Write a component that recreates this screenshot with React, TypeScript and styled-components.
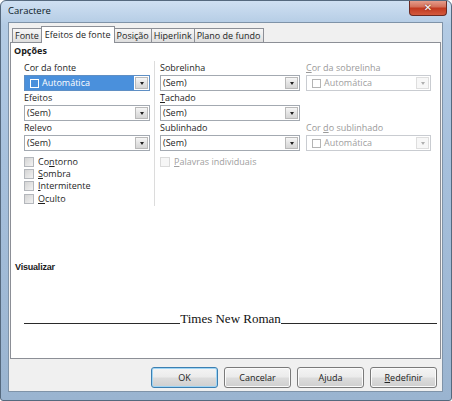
import styled, { createGlobalStyle, css } from 'styled-components';

const ui = '"Open Sans", "Noto Sans", sans-serif';

const GlobalStyle = createGlobalStyle`
  html, body { margin: 0; padding: 0; background: #ffffff; }
  body { font-family: ${ui}; font-size: 9px; color: #1e1e1e; }
  * { box-sizing: border-box; }
`;

const Window = styled.div`
  width: 452px;
  height: 401px;
  padding: 0 8px 8px 7px;
  display: flex;
  flex-direction: column;
  border: 1px solid #55697e;
  border-radius: 6px 6px 3px 3px;
  background: linear-gradient(180deg, #cfe0f2 0%, #b3cbe4 6%, #a6c0dc 40%, #9ab4d0 100%);
  overflow: hidden;
`;

const TitleBar = styled.div`
  height: 21px;
  display: flex;
  justify-content: space-between;
  align-items: flex-start;
`;

const Title = styled.div`
  padding: 3px 0 0 0;
  font-size: 9.5px;
  line-height: 14px;
  color: #0b1826;
`;

const CloseButton = styled.div`
  width: 38px;
  height: 16px;
  margin: -1px -4px 0 0;
  border: 1px solid #6c2a22;
  border-top: none;
  border-radius: 0 0 4px 4px;
  background: linear-gradient(180deg, #e8a493 0%, #d4705a 45%, #c2391f 55%, #d35a3e 100%);
  display: flex;
  align-items: center;
  justify-content: center;
  color: #ffffff;
  font-family: "DejaVu Sans", sans-serif;
  font-weight: bold;
  font-size: 10px;
  line-height: 1;
  text-shadow: 0 0 2px #5a1a10;
`;

const Client = styled.div`
  flex: 1;
  display: flex;
  flex-direction: column;
  border: 1px solid #7f93a8;
  background: #f0f0f0;
  padding: 3px 1px 0 1px;
`;

const TabBar = styled.div`
  height: 16px;
  display: flex;
  align-items: flex-end;
  padding-left: 2px;
  position: relative;
  z-index: 1;
`;

const Tab = styled.div<{ $active?: boolean }>`
  height: 14px;
  padding: 0 2px;
  margin-right: -1px;
  border: 1px solid #8c8f96;
  border-bottom: none;
  background: linear-gradient(180deg, #f6f6f6 0%, #ebebeb 50%, #dedede 100%);
  font-size: 9px;
  line-height: 13px;
  white-space: nowrap;
  ${({ $active }) =>
    $active &&
    css`
      height: 17px;
      margin-bottom: -1px;
      padding: 1px 3px 0;
      background: #ffffff;
      position: relative;
      z-index: 2;
    `}
`;

const Panel = styled.div`
  height: 317px;
  border: 1px solid #8c8f96;
  background: #ffffff;
  padding: 2px 3px 0 3px;
  display: flex;
  flex-direction: column;
`;

const SectionTitle = styled.div`
  font-weight: bold;
  font-size: 9px;
  line-height: 12px;
  color: #1a1a1a;
`;

const OptionsRow = styled.div`
  margin-top: 4px;
  height: 145px;
  display: flex;
  padding-left: 10px;
`;

const Column = styled.div<{ $w: number; $offset?: number }>`
  width: ${({ $w }) => $w}px;
  margin-left: ${({ $offset }) => $offset ?? 0}px;
  padding-top: 2px;
  display: flex;
  flex-direction: column;
`;

const Separator = styled.div`
  width: 1px;
  background: #dcdcdc;
  margin: 0 5px 0 4px;
`;

const Field = styled.div`
  height: 30px;
  display: flex;
  flex-direction: column;
`;

const Label = styled.div<{ $disabled?: boolean }>`
  height: 10px;
  line-height: 10px;
  font-size: 9px;
  white-space: nowrap;
  color: ${({ $disabled }) => ($disabled ? '#9a9a9a' : '#1e1e1e')};
`;

const Select = styled.div<{ $disabled?: boolean; $highlight?: boolean }>`
  margin-top: 2px;
  height: 16px;
  display: flex;
  border: 1px solid ${({ $disabled }) => ($disabled ? '#c9ccd1' : '#a3a9b1')};
  background: #ffffff;
  ${({ $highlight }) =>
    $highlight &&
    css`
      border-color: #5f8fc4;
    `}
`;

const SelectValue = styled.div<{ $disabled?: boolean; $highlight?: boolean }>`
  flex: 1;
  display: flex;
  align-items: center;
  gap: 3px;
  padding-left: ${({ $highlight, $disabled }) => ($highlight || $disabled ? '5px' : '2px')};
  font-size: 9px;
  line-height: 14px;
  white-space: nowrap;
  color: ${({ $disabled }) => ($disabled ? '#a0a0a0' : '#1e1e1e')};
  ${({ $highlight }) =>
    $highlight &&
    css`
      background: #4a90dc;
      color: #ffffff;
    `}
`;

const Swatch = styled.span<{ $light?: boolean; $disabled?: boolean }>`
  width: 9px;
  height: 9px;
  border: 1px solid ${({ $light, $disabled }) => ($light ? '#ffffff' : $disabled ? '#b4b4b4' : '#555')};
`;

const DropButton = styled.div<{ $disabled?: boolean }>`
  width: 13px;
  margin: 1px;
  border: 1px solid ${({ $disabled }) => ($disabled ? '#dedede' : '#b9b9b9')};
  background: ${({ $disabled }) =>
    $disabled ? '#f7f7f7' : 'linear-gradient(180deg, #f6f6f6 0%, #e4e4e4 50%, #d6d6d6 100%)'};
  display: flex;
  align-items: center;
  justify-content: center;

  &::after {
    content: '';
    border-left: 2.5px solid transparent;
    border-right: 2.5px solid transparent;
    border-top: 3px solid ${({ $disabled }) => ($disabled ? '#b0b0b0' : '#202020')};
  }
`;

const CheckList = styled.div`
  margin-top: 3px;
  display: flex;
  flex-direction: column;
`;

const CheckRow = styled.div<{ $gap?: number }>`
  height: 12px;
  margin-top: ${({ $gap }) => $gap ?? 0}px;
  display: flex;
  align-items: center;
  gap: 4px;
`;

const CheckBox = styled.span<{ $disabled?: boolean }>`
  width: 10px;
  height: 10px;
  border: 1px solid ${({ $disabled }) => ($disabled ? '#dadada' : '#b4b7bc')};
  background: ${({ $disabled }) =>
    $disabled ? '#f6f6f6' : 'linear-gradient(135deg, #d4d4d4 0%, #e6e6e6 60%, #f2f2f2 100%)'};
`;

const CheckText = styled.span<{ $disabled?: boolean }>`
  font-size: 9px;
  line-height: 12px;
  color: ${({ $disabled }) => ($disabled ? '#a0a0a0' : '#1e1e1e')};
`;

const Spacer = styled.div`
  height: 30px;
`;

const PreviewTitle = styled.div`
  margin-top: 56px;
  padding-left: 1px;
  height: 10px;
  line-height: 10px;
  font-family: "Liberation Sans", Arial, sans-serif;
  font-weight: bold;
  font-size: 9px;
  letter-spacing: -0.2px;
  color: #1a1a1a;
`;

const PreviewRow = styled.div`
  margin-top: 40px;
  margin-left: 10px;
  height: 14px;
  display: flex;
  align-items: flex-end;
`;

const PreviewLine = styled.div`
  flex: 1;
  height: 1px;
  margin-bottom: 2px;
  background: #2a2a2a;
`;

const PreviewText = styled.div`
  font-family: "Liberation Serif", "Times New Roman", serif;
  font-size: 13px;
  line-height: 14px;
  color: #111;
  white-space: nowrap;
`;

const ButtonBar = styled.div`
  flex: 1;
  display: flex;
  justify-content: flex-end;
  align-items: flex-start;
  gap: 6px;
  padding: 8px 4px 0 0;
`;

const Button = styled.div<{ $focused?: boolean }>`
  width: 67px;
  height: 21px;
  border: 1px solid #7a7a7a;
  border-radius: 3px;
  background: linear-gradient(180deg, #f4f4f4 0%, #ebebeb 48%, #dcdcdc 52%, #cfcfcf 100%);
  box-shadow: inset 0 0 0 1px #fbfbfb;
  display: flex;
  align-items: center;
  justify-content: center;
  font-size: 9px;
  color: #222;
  ${({ $focused }) =>
    $focused &&
    css`
      border-color: #3c7fb1;
      box-shadow: inset 0 0 0 1px #9fd5f5;
    `}
`;

type SelectProps = { value: string; swatch?: boolean; disabled?: boolean; highlight?: boolean };

function Combo({ value, swatch, disabled, highlight }: SelectProps) {
  return (
    <Select $disabled={disabled} $highlight={highlight}>
      <SelectValue $disabled={disabled} $highlight={highlight}>
        {swatch && <Swatch $light={highlight} $disabled={disabled} />}
        {value}
      </SelectValue>
      <DropButton $disabled={disabled} />
    </Select>
  );
}

export default function App() {
  return (
    <>
      <GlobalStyle />
      <Window>
        <TitleBar>
          <Title>Caractere</Title>
          <CloseButton>✕</CloseButton>
        </TitleBar>
        <Client>
          <TabBar>
            <Tab>Fonte</Tab>
            <Tab $active>Efeitos de fonte</Tab>
            <Tab>Posição</Tab>
            <Tab>Hiperlink</Tab>
            <Tab>Plano de fundo</Tab>
          </TabBar>
          <Panel>
            <SectionTitle>Opções</SectionTitle>
            <OptionsRow>
              <Column $w={126}>
                <Field>
                  <Label>Cor da fonte</Label>
                  <Combo value="Automática" swatch highlight />
                </Field>
                <Field>
                  <Label>Efeitos</Label>
                  <Combo value="(Sem)" />
                </Field>
                <Field>
                  <Label>Relevo</Label>
                  <Combo value="(Sem)" />
                </Field>
                <CheckList>
                  <CheckRow>
                    <CheckBox />
                    <CheckText>Co<u>n</u>torno</CheckText>
                  </CheckRow>
                  <CheckRow>
                    <CheckBox />
                    <CheckText><u>S</u>ombra</CheckText>
                  </CheckRow>
                  <CheckRow>
                    <CheckBox />
                    <CheckText><u>I</u>ntermitente</CheckText>
                  </CheckRow>
                  <CheckRow $gap={1}>
                    <CheckBox />
                    <CheckText><u>O</u>culto</CheckText>
                  </CheckRow>
                </CheckList>
              </Column>
              <Separator />
              <Column $w={140}>
                <Field>
                  <Label>Sobrelinha</Label>
                  <Combo value="(Sem)" />
                </Field>
                <Field>
                  <Label><u>T</u>achado</Label>
                  <Combo value="(Sem)" />
                </Field>
                <Field>
                  <Label>Sublinhado</Label>
                  <Combo value="(Sem)" />
                </Field>
                <CheckList>
                  <CheckRow>
                    <CheckBox $disabled />
                    <CheckText $disabled><u>P</u>alavras individuais</CheckText>
                  </CheckRow>
                </CheckList>
              </Column>
              <Column $w={125} $offset={6}>
                <Field>
                  <Label $disabled><u>C</u>or da sobrelinha</Label>
                  <Combo value="Automática" swatch disabled />
                </Field>
                <Spacer />
                <Field>
                  <Label $disabled>Cor <u>d</u>o sublinhado</Label>
                  <Combo value="Automática" swatch disabled />
                </Field>
              </Column>
            </OptionsRow>
            <PreviewTitle>Visualizar</PreviewTitle>
            <PreviewRow>
              <PreviewLine />
              <PreviewText>Times New Roman</PreviewText>
              <PreviewLine />
            </PreviewRow>
          </Panel>
          <ButtonBar>
            <Button $focused>OK</Button>
            <Button>Cancelar</Button>
            <Button>A<u>j</u>uda</Button>
            <Button><u>R</u>edefinir</Button>
          </ButtonBar>
        </Client>
      </Window>
    </>
  );
}
